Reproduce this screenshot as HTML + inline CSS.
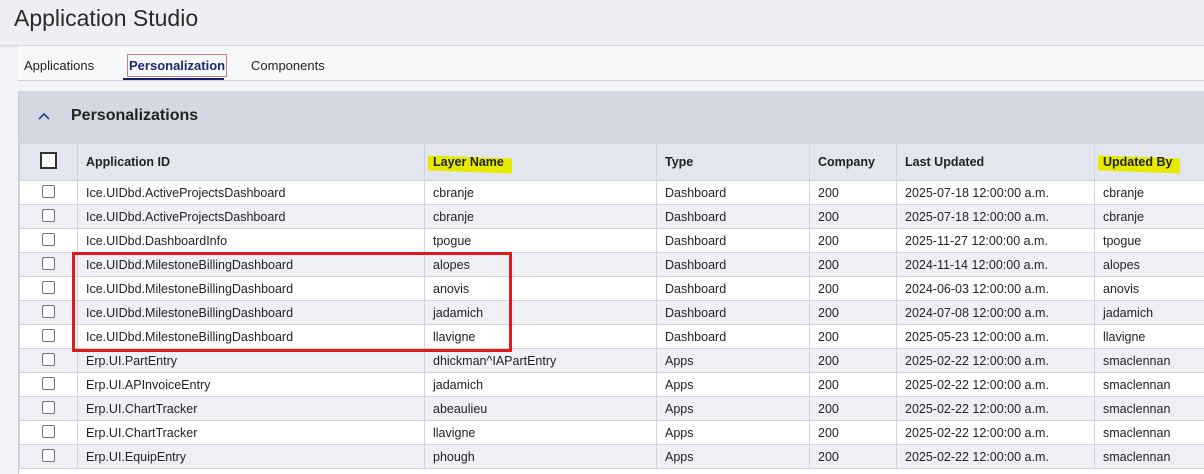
<!DOCTYPE html><html><head><style>
body{margin:0;width:1204px;height:474px;overflow:hidden;background:#f3f4f7;font-family:"Liberation Sans",sans-serif;position:relative}
.top{position:absolute;left:0;top:0;width:1204px;height:45px;background:#eeeff4;border-bottom:1px solid #d6d8de;box-shadow:0 1px 2px rgba(0,0,0,.08)}
.top h1{margin:0;position:absolute;left:14px;top:5px;font-size:23px;font-weight:normal;color:#2a2a2a}
.tabs{position:absolute;left:18px;top:46px;width:1186px;height:34px;border-bottom:1px solid #cfd2d8;background:#f7f8fa}
.tab{position:absolute;top:12px;font-size:13px;color:#222}
.panel{position:absolute;left:18px;top:91px;width:1186px;height:383px;background:#fff;border-left:1px solid #c8ccd4}
.ph{height:52px;background:#d3d8e3;position:relative}
.ph span{position:absolute;left:52px;top:16px;font-size:16px;font-weight:bold;color:#222}
table{border-collapse:collapse;position:absolute;top:52px;left:0;width:1186px;table-layout:fixed;font-size:12.5px;color:#222}
td,th{border:1px solid #d0d3d9;height:23px;padding:0 0 0 8px;text-align:left;white-space:nowrap;overflow:hidden}
th{height:36px;background:#e3e6ee;font-weight:bold;font-size:12.5px}
tr:nth-child(odd) td{background:#eef0f6}
.cb{display:inline-block;width:11px;height:11px;border:1px solid #777;border-radius:2px;background:#fff}
.hl{position:relative}
.hl:before{content:"";position:absolute;left:-5px;right:-8px;top:2px;bottom:-3px;background:#e5ea00;transform:skewY(2deg);z-index:-1}
th{position:relative;z-index:0}
</style></head><body>
<div class="top"><h1>Application Studio</h1></div>
<div class="tabs">
<span class="tab" style="left:6px">Applications</span>
<span class="tab" style="left:109px;top:8px;padding:3px 1px;border:1px solid #c87a8a;color:#1c2a70;font-weight:bold">Personalization</span>
<div style="position:absolute;left:105px;top:32px;width:101px;height:2px;background:#0f2270"></div>
<span class="tab" style="left:233px">Components</span>
</div>
<div class="panel">
<div class="ph"><svg style="position:absolute;left:19px;top:22px" width="12" height="8"><path d="M1 6L6 1L11 6" fill="none" stroke="#2a3a8a" stroke-width="1.6"/></svg><span>Personalizations</span></div>
<table>
<colgroup><col style="width:58px"><col style="width:347px"><col style="width:232px"><col style="width:153px"><col style="width:87px"><col style="width:198px"><col style="width:111px"></colgroup>
<tr><th style="padding-left:0;text-align:center"><span class="cb" style="width:13px;height:13px;border:2px solid #333;border-radius:0"></span></th><th>Application ID</th><th><span class="hl">Layer Name</span></th><th>Type</th><th>Company</th><th>Last Updated</th><th><span class="hl">Updated By</span></th></tr>
<tr><td style="padding:0;text-align:center"><span class="cb"></span></td><td>Ice.UIDbd.ActiveProjectsDashboard</td><td>cbranje</td><td>Dashboard</td><td>200</td><td>2025-07-18 12:00:00 a.m.</td><td>cbranje</td></tr>
<tr><td style="padding:0;text-align:center"><span class="cb"></span></td><td>Ice.UIDbd.ActiveProjectsDashboard</td><td>cbranje</td><td>Dashboard</td><td>200</td><td>2025-07-18 12:00:00 a.m.</td><td>cbranje</td></tr>
<tr><td style="padding:0;text-align:center"><span class="cb"></span></td><td>Ice.UIDbd.DashboardInfo</td><td>tpogue</td><td>Dashboard</td><td>200</td><td>2025-11-27 12:00:00 a.m.</td><td>tpogue</td></tr>
<tr><td style="padding:0;text-align:center"><span class="cb"></span></td><td>Ice.UIDbd.MilestoneBillingDashboard</td><td>alopes</td><td>Dashboard</td><td>200</td><td>2024-11-14 12:00:00 a.m.</td><td>alopes</td></tr>
<tr><td style="padding:0;text-align:center"><span class="cb"></span></td><td>Ice.UIDbd.MilestoneBillingDashboard</td><td>anovis</td><td>Dashboard</td><td>200</td><td>2024-06-03 12:00:00 a.m.</td><td>anovis</td></tr>
<tr><td style="padding:0;text-align:center"><span class="cb"></span></td><td>Ice.UIDbd.MilestoneBillingDashboard</td><td>jadamich</td><td>Dashboard</td><td>200</td><td>2024-07-08 12:00:00 a.m.</td><td>jadamich</td></tr>
<tr><td style="padding:0;text-align:center"><span class="cb"></span></td><td>Ice.UIDbd.MilestoneBillingDashboard</td><td>llavigne</td><td>Dashboard</td><td>200</td><td>2025-05-23 12:00:00 a.m.</td><td>llavigne</td></tr>
<tr><td style="padding:0;text-align:center"><span class="cb"></span></td><td>Erp.UI.PartEntry</td><td>dhickman^IAPartEntry</td><td>Apps</td><td>200</td><td>2025-02-22 12:00:00 a.m.</td><td>smaclennan</td></tr>
<tr><td style="padding:0;text-align:center"><span class="cb"></span></td><td>Erp.UI.APInvoiceEntry</td><td>jadamich</td><td>Apps</td><td>200</td><td>2025-02-22 12:00:00 a.m.</td><td>smaclennan</td></tr>
<tr><td style="padding:0;text-align:center"><span class="cb"></span></td><td>Erp.UI.ChartTracker</td><td>abeaulieu</td><td>Apps</td><td>200</td><td>2025-02-22 12:00:00 a.m.</td><td>smaclennan</td></tr>
<tr><td style="padding:0;text-align:center"><span class="cb"></span></td><td>Erp.UI.ChartTracker</td><td>llavigne</td><td>Apps</td><td>200</td><td>2025-02-22 12:00:00 a.m.</td><td>smaclennan</td></tr>
<tr><td style="padding:0;text-align:center"><span class="cb"></span></td><td>Erp.UI.EquipEntry</td><td>phough</td><td>Apps</td><td>200</td><td>2025-02-22 12:00:00 a.m.</td><td>smaclennan</td></tr>
</table>
</div>
<div style="position:absolute;left:72px;top:252px;width:434px;height:94px;border:3px solid #e01b1b"></div>
</body></html>
